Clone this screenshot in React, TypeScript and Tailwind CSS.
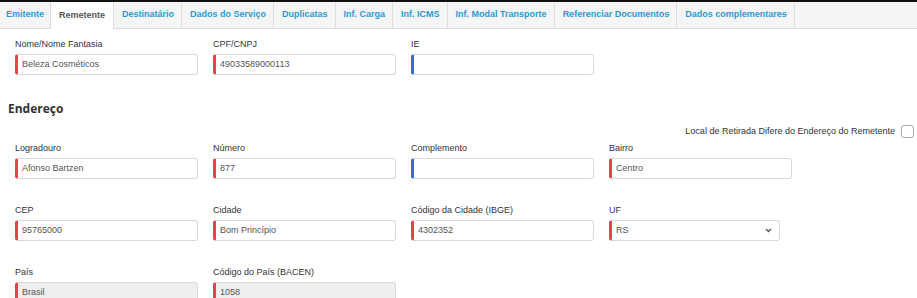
import React from "react";

const tabs = [
  "Emitente",
  "Remetente",
  "Destinatário",
  "Dados do Serviço",
  "Duplicatas",
  "Inf. Carga",
  "Inf. ICMS",
  "Inf. Modal Transporte",
  "Referenciar Documentos",
  "Dados complementares",
];

type FieldProps = {
  label: string;
  value?: string;
  accent?: "red" | "blue";
  disabled?: boolean;
  select?: boolean;
  width?: string;
};

function Field({ label, value = "", accent = "red", disabled, select, width = "w-[183px]" }: FieldProps) {
  return (
    <div className="flex flex-col">
      <div className="h-[11px] leading-[11px] text-[9px] text-[#333] mb-[4px] whitespace-nowrap">{label}</div>
      <div
        className={`${width} h-[21px] rounded-[3px] border border-[#d9d9d9] border-l-[3px] ${
          accent === "red" ? "border-l-[#e0464c]" : "border-l-[#2a72d8]"
        } ${disabled ? "bg-[#eeeeee]" : "bg-white"} flex items-center pl-[4px] pr-[8px] text-[9px] text-[#555]`}
      >
        <span className="flex-1 whitespace-nowrap">{value}</span>
        {select && (
          <svg width="7" height="5" viewBox="0 0 7 5" className="mr-[-1px]">
            <path d="M1 1 L3.5 3.5 L6 1" stroke="#555" strokeWidth="1.3" fill="none" />
          </svg>
        )}
      </div>
    </div>
  );
}

export default function App() {
  return (
    <div className="w-[917px] h-[298px] overflow-hidden bg-white" style={{ fontFamily: '"Liberation Sans", Arial, sans-serif' }}>
      <div className="h-[2px] bg-[#111]" />
      <div className="flex h-[27px] bg-[#f5f5f5] border-b border-[#dddddd]">
        {tabs.map((t, i) => {
          const active = t === "Remetente";
          const pad = i === 0 ? "px-[6px]" : active ? "px-[8px]" : "pl-[8px] pr-[7px]";
          return (
            <div
              key={t}
              className={`flex items-center ${pad} border-r border-[#dddddd] text-[9px] font-bold whitespace-nowrap ${
                active ? "bg-white text-[#555] mb-[-1px]" : "text-[#2a9ad3]"
              }`}
            >
              {t}
            </div>
          );
        })}
      </div>

      <div className="pl-[15px] pt-[10px]">
        <div className="flex gap-x-[15px]">
          <Field label="Nome/Nome Fantasia" value="Beleza Cosméticos" />
          <Field label="CPF/CNPJ" value="49033589000113" />
          <Field label="IE" accent="blue" />
        </div>
      </div>

      <div
        className="pl-[8px] mt-[26px] h-[16px] leading-[16px] text-[12px] font-bold text-[#333]"
        style={{ fontFamily: '"Open Sans", sans-serif' }}
      >
        Endereço
      </div>

      <div className="flex justify-end items-center gap-[6px] pr-[3px] mt-[8px] h-[13px]">
        <span className="text-[9px] text-[#333]">Local de Retirada Difere do Endereço do Remetente</span>
        <span className="w-[13px] h-[13px] rounded-[3px] border border-[#aaa] bg-white" />
      </div>

      <div className="pl-[15px] mt-[5px] flex flex-col gap-y-[26px]">
        <div className="flex gap-x-[15px]">
          <Field label="Logradouro" value="Afonso Bartzen" />
          <Field label="Número" value="877" />
          <Field label="Complemento" accent="blue" />
          <Field label="Bairro" value="Centro" />
        </div>
        <div className="flex gap-x-[15px]">
          <Field label="CEP" value="95765000" />
          <Field label="Cidade" value="Bom Princípio" />
          <Field label="Código da Cidade (IBGE)" value="4302352" />
          <Field label="UF" value="RS" select width="w-[171px]" />
        </div>
        <div className="flex gap-x-[15px]">
          <Field label="País" value="Brasil" disabled />
          <Field label="Código do País (BACEN)" value="1058" disabled />
        </div>
      </div>
    </div>
  );
}
